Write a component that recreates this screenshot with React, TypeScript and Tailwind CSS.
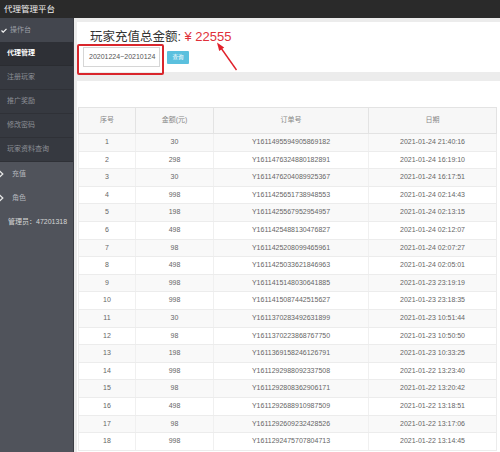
import React from "react";

const rows: [string, string, string, string][] = [
  ["1", "30", "Y1611495594905869182", "2021-01-24 21:40:16"],
  ["2", "298", "Y1611476324880182891", "2021-01-24 16:19:10"],
  ["3", "30", "Y1611476204089925367", "2021-01-24 16:17:51"],
  ["4", "998", "Y1611425651738948553", "2021-01-24 02:14:43"],
  ["5", "198", "Y1611425567952954957", "2021-01-24 02:13:15"],
  ["6", "498", "Y1611425488130476827", "2021-01-24 02:12:07"],
  ["7", "98", "Y1611425208099465961", "2021-01-24 02:07:27"],
  ["8", "498", "Y1611425033621846963", "2021-01-24 02:05:01"],
  ["9", "998", "Y1611415148030641885", "2021-01-23 23:19:19"],
  ["10", "998", "Y1611415087442515627", "2021-01-23 23:18:35"],
  ["11", "30", "Y1611370283492631899", "2021-01-23 10:51:44"],
  ["12", "98", "Y1611370223868767750", "2021-01-23 10:50:50"],
  ["13", "198", "Y1611369158246126791", "2021-01-23 10:33:25"],
  ["14", "998", "Y1611292988092337508", "2021-01-22 13:23:40"],
  ["15", "98", "Y1611292808362906171", "2021-01-22 13:20:42"],
  ["16", "498", "Y1611292688910987509", "2021-01-22 13:18:51"],
  ["17", "98", "Y1611292609232428526", "2021-01-22 13:17:06"],
  ["18", "998", "Y1611292475707804713", "2021-01-22 13:14:45"],
];

const subItems = ["注册玩家", "推广奖励", "修改密码", "玩家资料查询"];

function Chevron() {
  return (
    <svg width="5" height="8" viewBox="0 0 5 8" className="ml-[-1px] mr-[8px] shrink-0">
      <polyline points="0.5,0.8 3.8,4 0.5,7.2" fill="none" stroke="#e8e8e8" strokeWidth="1.3" />
    </svg>
  );
}

export default function App() {
  return (
    <div className="relative w-[500px] h-[452px] overflow-hidden flex flex-col bg-white font-['Liberation_Sans','Noto_Sans_CJK_SC',sans-serif]">
      <header className="h-[18px] shrink-0 bg-[#2a2a2a] text-[#f0f0f0] text-[8.5px] pl-[4px] flex items-center">
        代理管理平台
      </header>
      <div className="flex flex-1 min-h-0">
        <aside className="w-[73px] shrink-0 bg-[#50535b] flex flex-col text-[7px]">
          <div className="h-[24px] bg-[#43464e] flex items-center pl-[1px] text-[#9b9ea6]">
            <svg width="6" height="5" viewBox="0 0 6 5" className="mr-[3px]">
              <polyline points="0.5,2.5 2.2,4.2 5.5,0.8" fill="none" stroke="#f2f2f2" strokeWidth="1.2" />
            </svg>
            操作台
          </div>
          <div className="h-[24px] bg-[#2e3036] flex items-center pl-[7px] text-white font-bold border-b border-[#2a2c31]">
            代理管理
          </div>
          {subItems.map((s) => (
            <div
              key={s}
              className="h-[24px] bg-[#363940] flex items-center pl-[7px] text-[#8d9097] border-b border-[#2f3137]"
            >
              {s}
            </div>
          ))}
          <div className="h-[24px] flex items-center text-[#b4b7bd]">
            <Chevron />
            充值
          </div>
          <div className="h-[24px] flex items-center text-[#b4b7bd]">
            <Chevron />
            角色
          </div>
          <div className="h-[24px] flex items-center pl-[8px] text-[#d6d6d6]">管理员：47201318</div>
        </aside>
        <div className="w-[1px] shrink-0 bg-[#3b3d43]" />
        <main className="flex-1 min-w-0 bg-[#ececec] pl-[3px] pt-[4px] flex flex-col">
          <section className="h-[50px] shrink-0 bg-white relative">
            <div className="pl-[13px] pt-[8px] h-[22px] text-[12.5px] leading-[14px] text-[#333] whitespace-nowrap">
              玩家充值总金额: <span className="text-[#e0303a] text-[13px]">¥ 22555</span>
            </div>
            <div className="flex items-center pl-[6px] mt-[3px] gap-[7px]">
              <div className="w-[77px] h-[20px] border border-[#d6d6d6] bg-white flex items-center pl-[5px] text-[7px] text-[#555]">
                20201224~20210124
              </div>
              <button className="w-[22px] h-[13px] bg-[#5bc0de] text-white text-[5.5px] flex items-center justify-center rounded-[1px]">
                查询
              </button>
            </div>
            <div className="absolute left-[0px] top-[22px] w-[87px] h-[31px] border-2 border-[#d9262c] rounded-[2px]" />
          </section>
          <div className="h-[9px] shrink-0" />
          <section className="flex-1 bg-white pt-[26px] pl-[1px]">
            <div className="w-[419px] text-[7px] text-[#666]">
              <div className="flex h-[27px] bg-[#f7f7f7] border border-[#e3e3e3] text-[#888]">
                <div className="w-[57px] flex items-center justify-center border-r border-[#e3e3e3]">序号</div>
                <div className="w-[78px] flex items-center justify-center border-r border-[#e3e3e3]">金额(元)</div>
                <div className="w-[155px] flex items-center justify-center border-r border-[#e3e3e3]">订单号</div>
                <div className="flex-1 flex items-center justify-center">日期</div>
              </div>
              {rows.map((r, i) => (
                <div
                  key={r[0]}
                  className={
                    "flex h-[17.6px] border-x border-b border-[#ececec] " +
                    (i % 2 === 0 ? "bg-[#f9f9f9]" : "bg-white")
                  }
                >
                  <div className="w-[57px] flex items-center justify-center border-r border-[#f0f0f0]">{r[0]}</div>
                  <div className="w-[78px] flex items-center justify-center border-r border-[#f0f0f0]">{r[1]}</div>
                  <div className="w-[155px] flex items-center justify-center border-r border-[#f0f0f0]">{r[2]}</div>
                  <div className="flex-1 flex items-center justify-center">{r[3]}</div>
                </div>
              ))}
            </div>
          </section>
        </main>
      </div>
      <svg className="absolute left-0 top-0 pointer-events-none" width="500" height="452" viewBox="0 0 500 452">
        <path d="M236.5,70 Q228,58 221,48" fill="none" stroke="#e0202a" strokeWidth="1.4" />
        <polygon points="217,42.5 224.2,47.6 219.2,51" fill="#e0202a" />
      </svg>
    </div>
  );
}
